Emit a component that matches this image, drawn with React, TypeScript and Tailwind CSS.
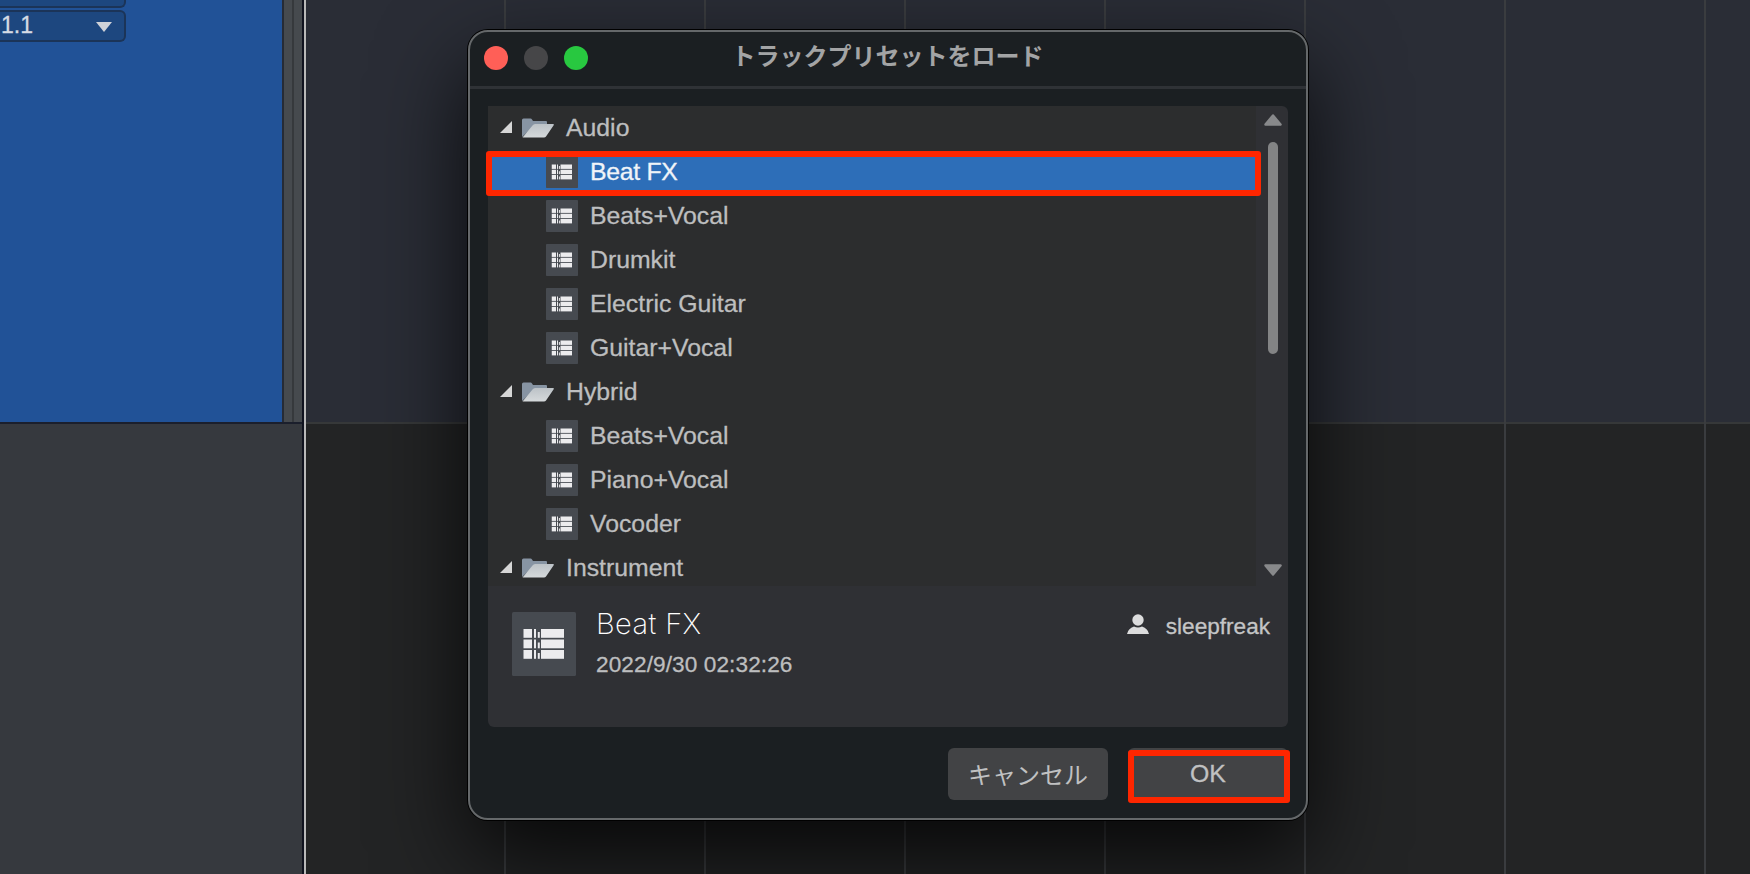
import type { ReactNode } from "react";

const presetGroups = [
  {
    name: "Audio",
    presets: ["Beat FX", "Beats+Vocal", "Drumkit", "Electric Guitar", "Guitar+Vocal"],
  },
  { name: "Hybrid", presets: ["Beats+Vocal", "Piano+Vocal", "Vocoder"] },
  { name: "Instrument", presets: [] },
];

const beats = [0, 1, 2, 3, 4, 5];

function TrackGlyph({ className }: { className: string }) {
  return (
    <svg viewBox="0 0 64 64" className={className}>
      <rect width="64" height="64" rx="1.5" fill="#464a50" />
      <g fill="#ececee">
        {[17, 27.5, 38].map((y) => (
          <g key={y}>
            <rect x="11.5" y={y} width="8.5" height="8.8" />
            <rect x="22" y={y} width="2" height="8.8" />
            <rect x="25.800" y={y + 3} width="2" height="5.8" />
            <rect x="29" y={y} width="23" height="8.8" />
          </g>
        ))}
      </g>
    </svg>
  );
}

function FolderIcon() {
  return (
    <svg viewBox="0 0 32 20" className="w-8 h-5">
      <defs>
        <linearGradient id="flap" x1="0" y1="0" x2="0" y2="1">
          <stop offset="0" stopColor="#bcc2c7" />
          <stop offset="1" stopColor="#d5d9db" />
        </linearGradient>
      </defs>
      <path d="M0 19V2Q0 .5 1.5 .5H8.500Q9.500 .5 10 1.500L11 3H24Q25 3 25 4V6L12 8Z" fill="#8794a3" />
      <path d="M0.500 19.500L10.500 7.500Q11.500 6 13 6H31Q32.500 6 31.500 7.500L24 18.500Q23.300 19.500 22 19.500Z" fill="url(#flap)" />
    </svg>
  );
}

function FolderRow({ name }: { name: string }) {
  return (
    <div className="flex h-11 shrink-0 items-center pl-3">
      <svg viewBox="0 0 12 12" className="size-3 -mt-[3px]">
        <path d="M12 0V12H0Z" fill="#d6d6d6" />
      </svg>
      <span className="-mt-px ml-2.5 flex">
        <FolderIcon />
      </span>
      <span className="ml-3">{name}</span>
    </div>
  );
}

function PresetRow({ name, selected }: { name: string; selected: boolean }) {
  return (
    <div
      className={
        selected
          ? "relative mt-0.5 flex h-[42px] shrink-0 items-center bg-[#2d6eb8] pb-0.5 pl-[58px] tracking-[-0.3px] text-[#f0f4f8]"
          : "flex h-11 shrink-0 items-center pl-[58px]"
      }
    >
      <TrackGlyph className="size-8" />
      <span className="ml-3">{name}</span>
      {selected && (
        <div className="absolute -left-[2px] -top-[1px] h-[45px] w-[775px] rounded-[3px] border-6 border-[#fe2600]" />
      )}
    </div>
  );
}

function DialogButton({ children }: { children: ReactNode }) {
  return (
    <button className="relative flex h-[52px] w-40 items-center justify-center rounded-md bg-[#424345] text-2xl text-[#c0c1c2]">
      {children}
    </button>
  );
}

function ScrollBar() {
  return (
    <div className="flex w-8 flex-col items-center justify-between pt-2 pb-[10px] pl-[2px]">
      <div className="flex flex-col items-center gap-4">
        <svg viewBox="0 0 18 12" className="h-3 w-[18px]">
          <path d="M9 1.500L16.500 10.500H1.500Z" fill="#88898b" stroke="#88898b" strokeWidth="2.500" strokeLinejoin="round" />
        </svg>
        <div className="h-[212px] w-[10px] rounded-full bg-[#838485]" />
      </div>
      <svg viewBox="0 0 18 12" className="h-3 w-[18px]">
        <path d="M9 10.500L16.500 1.500H1.500Z" fill="#88898b" stroke="#88898b" strokeWidth="2.500" strokeLinejoin="round" />
      </svg>
    </div>
  );
}

/* Track header on the left, arranger grid on the right */
function Arranger() {
  return (
    <div className="flex h-full w-full">
      <div className="flex w-[302px] flex-col">
        <div className="flex h-[422px]">
          <div className="w-[282px] bg-[#215297]">
            <div className="h-2 w-[126px] rounded-br-md border-r-2 border-b-2 border-[#1b3458] bg-[#1d477f]" />
            <div className="mt-0.5 flex h-8 w-[126px] items-center justify-between rounded-r-md border-2 border-l-0 border-[#1b3458] bg-[#1d477f] pr-3 pl-px">
              <span className="-mt-0.5 text-[23px] leading-none text-[#d5dbe4] [-webkit-text-stroke:0.3px]">1.1</span>
              <svg viewBox="0 0 16 10" className="mt-0.5 h-[10px] w-4">
                <path d="M0 0H16L8 10Z" fill="#cfd2d8" />
              </svg>
            </div>
          </div>
          <div className="w-0.5 bg-[#262b35]" />
          <div className="w-2 bg-[#464a4e]" />
          <div className="w-0.5 bg-[#36393c]" />
          <div className="w-2 bg-[#464a4e]" />
        </div>
        <div className="h-0.5 bg-[#1b1f2c]" />
        <div className="flex-1 bg-[#36393e]" />
      </div>
      <div className="w-0.5 bg-[#10131f]" />
      <div className="w-0.5 bg-[#b9b9b9]" />
      <div className="relative flex-1">
        <div className="flex h-full flex-col">
          <div className="h-[422px] bg-[#2a2d36]" />
          <div className="h-0.5 bg-[#363839]" />
          <div className="flex-1 bg-[#232425]" />
        </div>
        <div className="absolute inset-0 flex pl-[198px]">
          {beats.map((beat) => (
            <div key={beat} className="w-[200px] shrink-0 border-l-2 border-[#3a3c3f]" />
          ))}
          <div className="w-0.5 bg-[#3a3c3f]" />
        </div>
      </div>
    </div>
  );
}

function PresetDialog() {
  return (
    <div className="absolute top-[30px] left-[468px] flex h-[790px] w-[840px] flex-col rounded-[20px] border-2 border-[#65686a] bg-[#1b1f22] shadow-[0_0_0_1px_#000,0_36px_90px_0_rgba(0,0,0,0.8)]">
      <div className="flex h-[57px] shrink-0 items-center border-b-3 border-[#2f3236] px-3.5 pb-0.5">
        <div className="flex w-[104px] shrink-0 gap-4">
          <span className="size-6 shrink-0 rounded-full bg-[#ff5f57]" />
          <span className="size-6 shrink-0 rounded-full bg-[#464648]" />
          <span className="size-6 shrink-0 rounded-full bg-[#28c840]" />
        </div>
        <h1 className="-mt-0.5 flex-1 pr-[105px] text-center text-2xl leading-none font-bold text-[#a3a4a5]">
          トラックプリセットをロード
        </h1>
      </div>

      <div className="mx-[18px] mt-[17px] flex h-[621px] shrink-0 flex-col rounded-md bg-[#2f3034]">
        <div className="flex h-[480px]">
          <div className="h-full w-[768px] bg-[#2c2d2e] text-[24.8px] leading-8 text-[#bdbebf] [-webkit-text-stroke:0.3px]">
            <div className="flex h-full flex-col overflow-y-clip">
              {presetGroups.map((group) => (
                <div key={group.name} className="flex shrink-0 flex-col">
                  <FolderRow name={group.name} />
                  {group.presets.map((preset) => (
                    <PresetRow key={preset} name={preset} selected={preset === "Beat FX"} />
                  ))}
                </div>
              ))}
            </div>
          </div>
          <ScrollBar />
        </div>

        <div className="flex items-start pt-[26px] pr-[18px] pl-6">
          <TrackGlyph className="size-16" />
          <div className="ml-5 flex-1">
            <h2 className="-mt-[3px] font-['Inter'] text-[29px] leading-[30px] font-extralight tracking-[0.4px] text-white">
              Beat FX
            </h2>
            <p className="mt-[13px] text-[22.6px] leading-[26px] tracking-[0.1px] text-[#bdbebf] [-webkit-text-stroke:0.3px]">
              2022/9/30 02:32:26
            </p>
          </div>
          <div className="mt-px flex items-center gap-[17px] text-[22.6px] leading-[28px] text-[#c4c5c6] [-webkit-text-stroke:0.3px]">
            <svg viewBox="0 0 22 20" className="-mt-1.5 h-5 w-[22px]">
              <circle cx="11" cy="6" r="5.700" fill="#dcdcdd" />
              <path d="M0 20Q1 14.500 7 12.500Q11 14.500 15 12.500Q21 14.500 22 20Z" fill="#dcdcdd" />
            </svg>
            <span>sleepfreak</span>
          </div>
        </div>
      </div>

      <div className="mt-[21px] mr-[18px] flex justify-end gap-5">
        <DialogButton>
          <span className="pt-[3px]">キャンセル</span>
        </DialogButton>
        <DialogButton>
          <span className="text-[24.8px] [-webkit-text-stroke:0.3px]">OK</span>
          <span className="absolute top-[2px] left-0 h-[53px] w-[162px] rounded-[3px] border-6 border-[#fe2600]" />
        </DialogButton>
      </div>
    </div>
  );
}

export default function App() {
  return (
    <div className="relative h-[874px] w-[1750px] overflow-hidden bg-[#232425] font-['Liberation_Sans','Noto_Sans_CJK_JP',sans-serif]">
      <Arranger />
      <PresetDialog />
    </div>
  );
}
